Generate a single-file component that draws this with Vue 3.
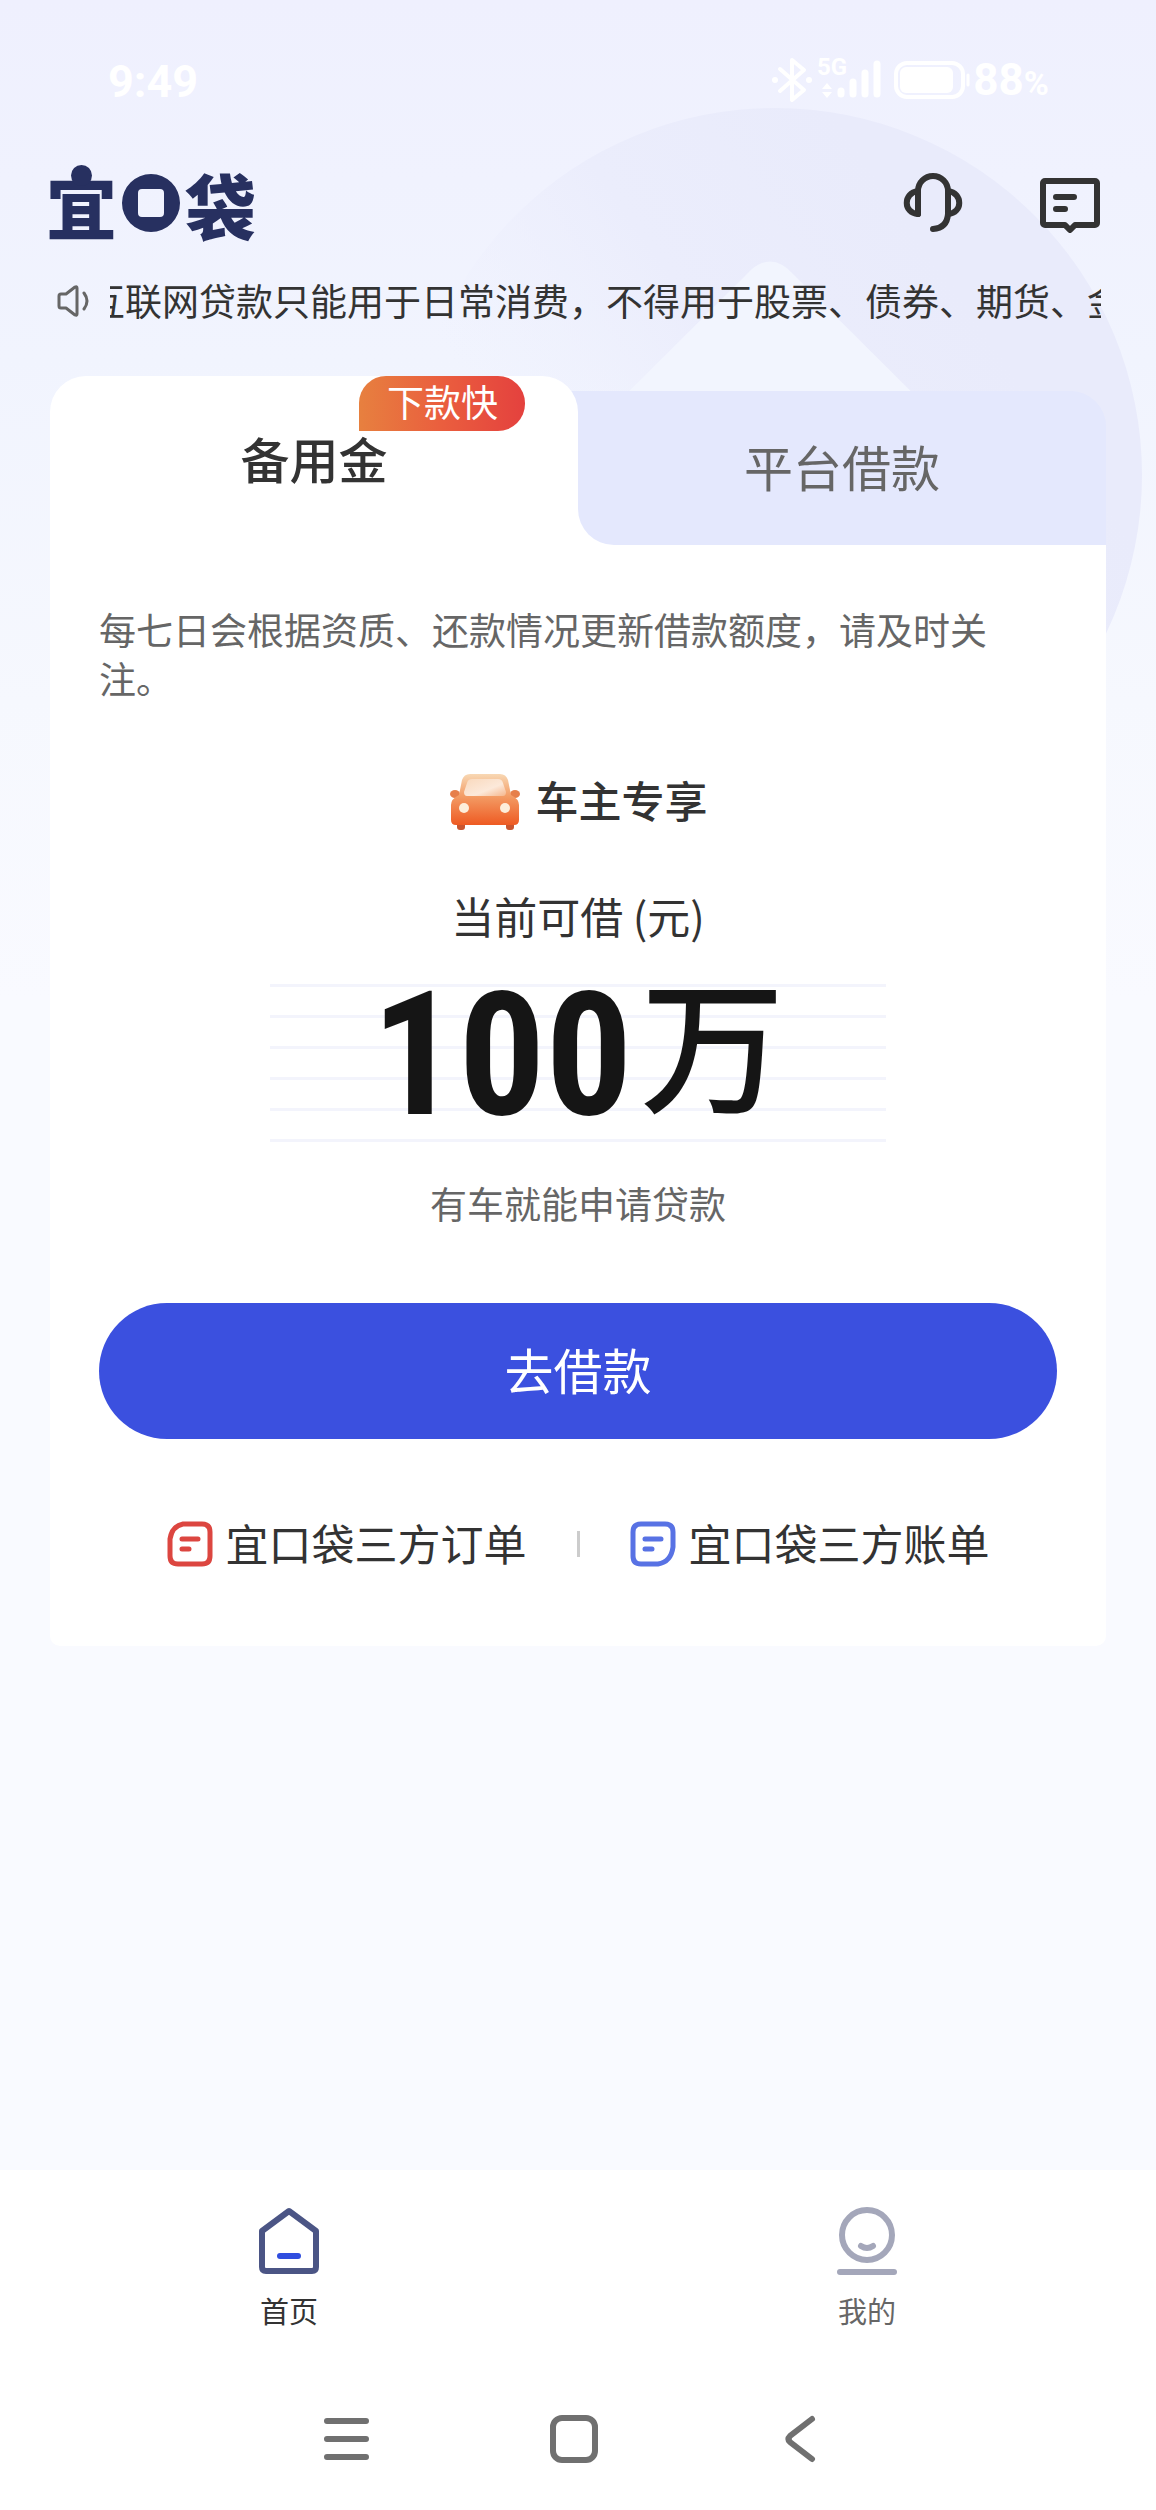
<script setup>
import { ref } from 'vue'

const activeTab = ref('reserve')
const notice = '互联网贷款只能用于日常消费，不得用于股票、债券、期货、金'
</script>

<template>
  <div class="page">
    <svg class="backdrop" viewBox="0 0 1156 900" aria-hidden="true">
      <defs>
        <linearGradient id="disc" gradientUnits="userSpaceOnUse" x1="880" y1="180" x2="510" y2="440">
          <stop offset="0" stop-color="#e9ebfb" />
          <stop offset="0.5" stop-color="#ebedfc" />
          <stop offset="1" stop-color="#eef0fd" stop-opacity="0" />
        </linearGradient>
      </defs>
      <circle cx="775" cy="475" r="367" fill="url(#disc)" />
      <path d="M746 275 Q770 248 794 275 L960 440 H580 Z" fill="#f2f5fe" />
    </svg>

    <div class="status">
      <span class="time">9:49</span>
      <div class="signals">
        <svg width="122" height="64" viewBox="0 -8 122 64" fill="none" stroke="#fff" aria-hidden="true">
          <path d="M8 13 L32 34 L20 44 V4 L32 14 L8 35" stroke-width="4" stroke-linejoin="round" stroke-linecap="round" />
          <circle cx="3" cy="24" r="3" fill="#fff" stroke="none" />
          <circle cx="37" cy="24" r="3" fill="#fff" stroke="none" />
          <text x="45" y="19" class="net">5G</text>
          <path d="M50 33 l5 -6 5 6z M50 36 l5 6 5 -6z" fill="#fff" stroke="none" />
          <path d="M69 35v3 M81 26v12 M93 17v21 M105 8v30" stroke-width="7" stroke-linecap="round" />
        </svg>
        <svg width="77" height="40" viewBox="0 0 77 40" fill="none" stroke="#fff" aria-hidden="true">
          <rect x="2" y="3" width="67" height="34" rx="11" stroke-width="4" />
          <rect x="6" y="7" width="53" height="26" rx="6" fill="#fff" stroke="none" />
          <path d="M74 15v10" stroke-width="3" stroke-linecap="round" />
        </svg>
        <span class="battery">88<small>%</small></span>
      </div>
    </div>

    <header class="header">
      <h1 class="logo" aria-label="宜口袋">
        <span class="head">宜</span>
        <svg width="60" height="60" viewBox="0 0 60 60" aria-hidden="true">
          <path d="M30 1a29 29 0 1 0 0 58a29 29 0 1 0 0-58z M21 16h18a4 4 0 0 1 4 4v20a4 4 0 0 1-4 4h-18a4 4 0 0 1-4-4v-20a4 4 0 0 1 4-4z" fill="#273060" fill-rule="evenodd" />
        </svg>
        <span>袋</span>
      </h1>
      <div class="actions">
        <button class="icon-btn" aria-label="客服">
          <svg width="60" height="60" viewBox="0 0 60 60" fill="none" stroke="#333" stroke-width="6" stroke-linecap="round" stroke-linejoin="round">
            <path d="M15 41V18a15 15 0 0 1 30 0V41Q44 55 30 56" />
            <path d="M15 18C0 20 0 40 15 41" />
            <path d="M45 18C60 20 60 40 45 41" />
          </svg>
        </button>
        <button class="icon-btn" aria-label="消息">
          <svg width="62" height="60" viewBox="0 0 62 60" fill="none" stroke="#333" stroke-width="6" stroke-linecap="round" stroke-linejoin="round">
            <path d="M6 8H56a2 2 0 0 1 2 2V50a2 2 0 0 1-2 2H36L31 57L26 52H6a2 2 0 0 1-2-2V10a2 2 0 0 1 2-2z" />
            <path d="M17 24H35M17 36H26" />
          </svg>
        </button>
      </div>
    </header>

    <div class="notice">
      <svg width="34" height="34" viewBox="0 0 34 34" fill="none" stroke="#666" stroke-width="3" stroke-linecap="round" stroke-linejoin="round" aria-hidden="true">
        <path d="M2 12Q2 10 4 10H9L18 3Q20 2 20 4V30Q20 32 18 31L9 24H4Q2 24 2 22Z" />
        <path d="M27 9Q33 17 27 25" />
      </svg>
      <div class="marquee"><span>{{ notice }}</span></div>
    </div>

    <main class="card">
      <ul class="tabs">
        <li class="tab active">
          <button @click="activeTab = 'reserve'">备用金</button>
          <span class="badge">下款快</span>
        </li>
        <li class="tab idle">
          <button @click="activeTab = 'platform'">平台借款</button>
        </li>
      </ul>

      <section class="body">
        <p class="tip">每七日会根据资质、还款情况更新借款额度，请及时关注。</p>

        <div class="perk">
          <svg width="72" height="60" viewBox="0 0 72 60" aria-hidden="true">
            <defs>
              <linearGradient id="car" x1="0" y1="0" x2="0" y2="1">
                <stop offset="0" stop-color="#f8d8b4" />
                <stop offset="0.45" stop-color="#f39a63" />
                <stop offset="1" stop-color="#ee5a22" />
              </linearGradient>
              <linearGradient id="glass" x1="0" y1="0" x2="1" y2="1">
                <stop offset="0" stop-color="#f9d9bd" />
                <stop offset="0.6" stop-color="#fce9da" />
                <stop offset="1" stop-color="#f5b68c" />
              </linearGradient>
            </defs>
            <rect x="8" y="48" width="8" height="11" rx="3" fill="#c9552f" />
            <rect x="57" y="48" width="8" height="11" rx="3" fill="#c9552f" />
            <ellipse cx="6" cy="23" rx="5" ry="4" fill="#e67f4b" />
            <ellipse cx="66" cy="23" rx="5" ry="4" fill="#e67f4b" />
            <path d="M21 3H51Q57 3 59 9L62 24Q70 28 70 34V49Q70 54 65 54H7Q2 54 2 49V34Q2 28 10 24L13 9Q15 3 21 3Z" fill="url(#car)" />
            <path d="M23 8H49Q53 8 54 12L57 21Q57 25 54 25H18Q15 25 15 21L18 12Q19 8 23 8Z" fill="url(#glass)" />
            <circle cx="15" cy="37" r="5" fill="#fdeedb" />
            <circle cx="56" cy="37" r="5" fill="#fdeedb" />
          </svg>
          <strong>车主专享</strong>
        </div>

        <p class="caption">当前可借 (元)</p>
        <p class="amount"><span class="digits">100</span><span class="unit">万</span></p>
        <p class="remark">有车就能申请贷款</p>
        <button class="apply">去借款</button>

        <div class="links">
          <a href="#orders">
            <svg width="46" height="46" viewBox="0 0 46 46" fill="none" stroke="#dc4640" stroke-width="5" stroke-linecap="round" aria-hidden="true">
              <path d="M16 3H35Q43 3 43 11V35Q43 43 35 43H11Q3 43 3 35V18Q5 5 16 3Z" />
              <path d="M15 18H31M15 28H22" />
            </svg>
            <span>宜口袋三方订单</span>
          </a>
          <i class="divider"></i>
          <a href="#bills">
            <svg width="46" height="46" viewBox="0 0 46 46" fill="none" stroke="#5872e4" stroke-width="5" stroke-linecap="round" aria-hidden="true">
              <path d="M11 3H35Q43 3 43 11V26Q41 41 28 43H11Q3 43 3 35V11Q3 3 11 3Z" />
              <path d="M15 18H31M15 28H22" />
            </svg>
            <span>宜口袋三方账单</span>
          </a>
        </div>
      </section>
    </main>

    <nav class="tabbar">
      <a href="#home" class="current">
        <svg width="64" height="72" viewBox="0 0 64 72" fill="none" stroke-linecap="round" stroke-linejoin="round" aria-hidden="true">
          <path d="M32 6L59 26V62Q59 66 55 66H9Q5 66 5 62V26Z" stroke="#4b5585" stroke-width="6" />
          <path d="M23 51H41" stroke="#304edf" stroke-width="6" />
        </svg>
        首页
      </a>
      <a href="#mine">
        <svg width="64" height="72" viewBox="0 0 64 72" fill="none" stroke="#a4a7ba" stroke-linecap="round" aria-hidden="true">
          <circle cx="32" cy="30" r="25" stroke-width="6" />
          <path d="M26 41Q32 45 38 41" stroke-width="6" />
          <path d="M5 67H59" stroke-width="6" />
        </svg>
        我的
      </a>
    </nav>

    <div class="system">
      <button class="icon-btn" aria-label="最近任务">
        <svg width="50" height="50" viewBox="0 0 50 50" fill="none" stroke="#707070" stroke-width="6" stroke-linecap="round"><path d="M5 7H44M5 25H44M5 43H44" /></svg>
      </button>
      <button class="icon-btn" aria-label="主屏幕">
        <svg width="50" height="50" viewBox="0 0 50 50" fill="none" stroke="#707070" stroke-width="6"><rect x="4" y="4" width="42" height="42" rx="9" /></svg>
      </button>
      <button class="icon-btn" aria-label="返回">
        <svg width="50" height="50" viewBox="0 0 50 50" fill="none" stroke="#707070" stroke-width="6" stroke-linecap="round"><path d="M36 5L14 22Q11 25 14 28L36 45" /></svg>
      </button>
    </div>
  </div>
</template>

<style>
body {
  margin: 0;
}
</style>

<style scoped>
.page {
  position: relative;
  display: flex;
  flex-direction: column;
  min-height: 100vh;
  overflow: hidden;
  background: linear-gradient(#eff0fe 0, #f1f4fe 360px, #f6f8fe 700px, #f9faff 1000px);
  color: #333;
  font-family: "Noto Sans CJK SC", sans-serif;
}
h1, p, ul {
  margin: 0;
  padding: 0;
}
button {
  border: 0;
  padding: 0;
  background: none;
  color: inherit;
  font: inherit;
}
a {
  color: inherit;
  text-decoration: none;
}
svg {
  display: block;
  flex: none;
}
.backdrop {
  position: absolute;
  top: 0;
  left: 0;
  width: 100%;
}
.status,
.header,
.notice,
.card {
  position: relative;
}
.status {
  display: flex;
  align-items: center;
  justify-content: space-between;
  height: 160px;
  padding: 0 107px 0 108px;
  color: #fff;
  font-family: Roboto, sans-serif;
  font-weight: 700;
}
.time {
  padding-top: 2px;
  font-size: 45px;
}
.signals {
  display: flex;
  align-items: center;
}
.net {
  fill: #fff;
  stroke: none;
  font-size: 24px;
}
.battery {
  padding-left: 2px;
  font-size: 44px;
}
.battery small {
  font-size: 34px;
}
.header {
  display: flex;
  align-items: center;
  justify-content: space-between;
  height: 86px;
  padding: 0 55px 0 46px;
}
.logo {
  display: flex;
  align-items: center;
  gap: 4px;
  color: #273060;
  font-size: 71px;
  font-weight: 900;
  line-height: 86px;
}
.head {
  position: relative;
}
.head::before {
  content: "";
  position: absolute;
  top: 5px;
  left: 25px;
  width: 21px;
  height: 21px;
  border-radius: 50%;
  background: #273060;
}
.actions {
  display: flex;
  gap: 76px;
}
.notice {
  display: flex;
  align-items: center;
  gap: 19px;
  height: 110px;
  margin-bottom: 20px;
  padding: 0 55px 0 57px;
  font-size: 37px;
}
.marquee {
  flex: 1;
  overflow: hidden;
  padding-bottom: 3px;
  white-space: nowrap;
}
.marquee span {
  margin-left: -22px;
}
.card {
  margin: 0 50px;
}
.tabs {
  display: flex;
  list-style: none;
  font-size: 49px;
}
.tab {
  position: relative;
  flex: 1;
}
.tab button {
  width: 100%;
  height: 100%;
  padding-bottom: 6px;
}
.active {
  z-index: 1;
  height: 169px;
  border-radius: 36px 36px 0 0;
  background: #fff;
  font-weight: 500;
}
.idle {
  margin: 15px 0 0 -36px;
  padding-left: 36px;
  border-radius: 0 36px 0 0;
  background: linear-gradient(#e4e8fd 60px, #fff 60px);
  color: #666;
}
.idle button {
  border-radius: 0 36px 0 36px;
  background: #e4e8fd;
}
.badge {
  position: absolute;
  top: 0;
  right: 53px;
  height: 55px;
  padding: 0 27px 0 28px;
  border-radius: 27px 27px 27px 0;
  background: linear-gradient(90deg, #e7803f, #ea5e3e 50%, #e4413e);
  color: #fff;
  font-size: 37px;
  font-weight: 400;
  line-height: 51px;
}
.body {
  display: flex;
  flex-direction: column;
  align-items: center;
  padding: 60px 49px 72px;
  border-radius: 0 0 10px 10px;
  background: #fff;
}
.tip {
  align-self: stretch;
  color: #666;
  font-size: 37px;
  line-height: 49px;
}
.perk {
  display: flex;
  align-items: center;
  gap: 15px;
  height: 60px;
  margin-top: 68px;
  font-size: 43px;
}
.perk strong {
  padding-bottom: 4px;
  font-weight: 500;
}
.caption {
  margin-top: 54px;
  font-size: 43px;
  line-height: 60px;
}
.amount {
  display: flex;
  align-items: flex-start;
  justify-content: center;
  gap: 8px;
  width: 616px;
  height: 158px;
  margin-top: 39px;
  background: repeating-linear-gradient(#f3f4fc 0 3px, transparent 3px 31px);
  color: #151515;
}
.digits {
  font-family: "Roboto Condensed", Roboto, sans-serif;
  font-size: 172px;
  font-weight: 700;
  line-height: 142px;
}
.unit {
  font-size: 144px;
  font-weight: 500;
  line-height: 110px;
}
.remark {
  margin-top: 36px;
  color: #666;
  font-size: 37px;
  line-height: 50px;
}
.apply {
  align-self: stretch;
  height: 136px;
  margin-top: 75px;
  padding-bottom: 6px;
  border-radius: 68px;
  background: #3b50df;
  color: #fff;
  font-size: 49px;
}
.links {
  display: flex;
  align-items: center;
  gap: 50px;
  height: 60px;
  margin-top: 75px;
  font-size: 43px;
}
.links a {
  display: flex;
  align-items: center;
  gap: 13px;
}
.links span {
  padding-bottom: 4px;
}
.divider {
  width: 3px;
  height: 26px;
  background: #ccc;
}
.tabbar {
  display: flex;
  height: 200px;
  margin-top: auto;
  background: #fff;
  color: #666;
  font-size: 29px;
}
.tabbar a {
  display: flex;
  flex: 1;
  flex-direction: column;
  align-items: center;
  gap: 13px;
  padding-top: 35px;
  line-height: 40px;
}
.tabbar .current {
  color: #333;
}
.system {
  display: flex;
  align-items: center;
  justify-content: center;
  gap: 177px;
  height: 137px;
  padding: 0 9px 3px 0;
  background: #fff;
}
</style>
